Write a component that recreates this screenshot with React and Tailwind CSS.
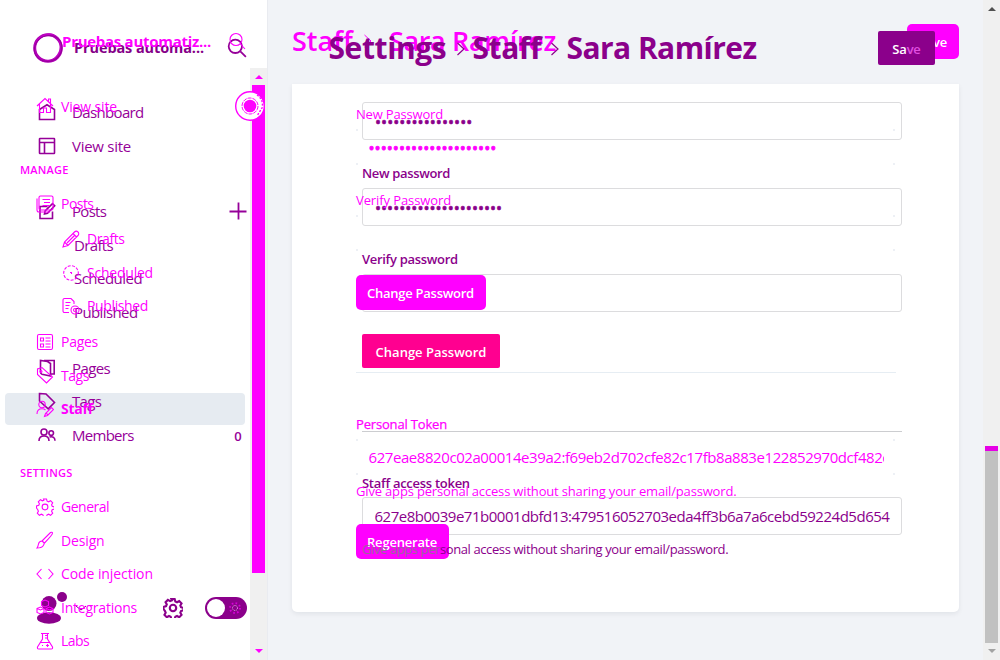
import React from 'react';

function Svg({ size = 18, sw = 1.2, className = '', children }) {
  return (
    <svg width={size} height={size} viewBox="0 0 18 18" fill="none" stroke="currentColor" strokeWidth={sw} className={'shrink-0 ' + className}>
      {children}
    </svg>
  );
}

const icons = {
  houseThin: <><path d="M1 9 9 1.5 17 9M3.5 7v8.500h4v-4.500h3v4.500h4V7M12.500 4.500V2h2v4" /></>,
  posts: <><rect x="3" y="1" width="14" height="14" rx="1.500" /><path d="M1 3.500v11.500a2 2 0 0 0 2 2h11M6.500 4.500h7.500M8 7.500h6M6.500 10.500h7" /></>,
  pencil: <><path d="M1 17l1.500-5L12.500 2a2.400 2.400 0 0 1 3.500 3.500L6 15.500zM2.500 12 6 15.500M11 3.500 14.500 7M5 13l7.500-7.500" /></>,
  clock: <><circle cx="9" cy="9" r="7.300" strokeDasharray="3 1.400" /><path d="M8 8.500h2M9.500 8.500v1.500" /></>,
  published: <><path d="M7 15.500H2.500A1.500 1.500 0 0 1 1 14V3A1.500 1.500 0 0 1 2.500 1.500H9L12 4.500V7M3.500 5.500h5M3.500 8.500h4M3.500 11.500h3" /><circle cx="13" cy="13" r="4" /><circle cx="13" cy="13" r="1.500" /></>,
  pages: <><rect x="1.500" y="1.500" width="15" height="15" rx="1.500" /><path d="M4.500 5h3v3h-3zM4.500 11h3v3h-3zM9.500 5h5M9.500 8h5M9.500 11h5M9.500 14h5" /></>,
  tagThin: <><path d="M1.500 8.500V3l4.500-1.500L16.500 11 10.500 17z" /><circle cx="5" cy="5.500" r="1" /></>,
  staff: <><circle cx="6" cy="4.500" r="3.200" /><path d="M1 14c0-3.500 2-5.200 5-5.200 1.500 0 2.600.4 3.500 1.200M8.500 16.500l1-3 6-6 2 2-6 6zM10 13l2 2" /></>,
  gear: <><path d="M7.500 1h3l.6 2.200 1.500.6 2-1.100 2.100 2.100-1.100 2 .6 1.500 2.300.7v2l-2.300.7-.6 1.500 1.100 2-2.100 2.100-2-1.100-1.500.6-.6 2.200h-3l-.6-2.200-1.500-.6-2 1.100-2.100-2.100 1.100-2-.6-1.500L.5 10V8l2.300-.7.6-1.500-1.100-2 2.100-2.100 2 1.100 1.500-.6z" /><circle cx="9" cy="9" r="2.900" /></>,
  brush: <><path d="M6 10 14.500 1.500q1.500-.8 2 .5T8.500 12zM6 10q-3 .2-3.500 3T1 17q4.500 0 6-2t1-3.200z" /></>,
  code: <><path d="M5.500 4 1 9l4.500 5M12.500 4 17 9l-4.500 5" /></>,
  modules: <><path d="M1 10.500 4.500 9 8 10.500v4L4.500 16 1 14.500zM10 10.500 13.500 9 17 10.500v4L13.500 16 10 14.500zM5.500 3.500 9 2l3.500 1.500v4L9 9 5.500 7.500zM1 10.500 4.500 12 8 10.500M10 10.500l3.500 1.500 3.500-1.500" /></>,
  flask: <><path d="M5 1.500h8M6.500 1.500v5.500L1.500 15q-.5 2 1.200 2h12.600q1.700 0 1.200-2L11.500 7V1.500M4 10.500h10M9 3.500h2.500M9 6h2.500M10 13.500h3M11.500 12v3M6 13.500h1" /></>,
  dash: <><path d="M1.500 6.500 9 1.800l7.500 4.700v10h-15z" /></>,
  browser: <><rect x="1.500" y="1.500" width="15" height="15" rx=".5" /><path d="M1.500 5.500h15M6.500 5.500v11" /></>,
  edit: <><path d="M9.500 4.500H2v12h12.500V9.500M6.500 12l.6-3L14.500 1.600l2.200 2.200L9.500 11.200z" /></>,
  book: <><path d="M6 1.500h10.200v13.500H13M2.500 1.500v11.500c0 1 .5 1.800 1.500 2.200l8.500 1.800V4.500L9.500 2.500 2.500 1.500z" /></>,
  tag: <><path d="M1.500 1.500 8 2l8.500 8.500-6.300 6.300L1.500 9z" /></>,
  members: <><circle cx="6" cy="6" r="3" /><circle cx="13.200" cy="7" r="2.300" /><path d="M1 15c0-3.300 2-5 5-5s5 1.700 5 5M11.500 11c3.500-1 5.500.8 5.500 3.800" /></>,
  chevron: <path d="M5.500 3 12 9l-6.500 6" />,
};

function ItemA({ icon, label, child, bold, className = '' }) {
  return (
    <div className={`flex h-[33.500px] shrink-0 items-center gap-[7px] text-[14px] ${child ? 'pl-[62px]' : 'pl-[36px]'} ${bold ? 'font-bold' : ''} ${className}`}>
      <Svg sw={1.1} size={18}>{icons[icon]}</Svg>
      {label}
    </div>
  );
}

function ItemB({ icon, label, right, className = '' }) {
  return (
    <div className={`flex h-[33.500px] shrink-0 items-center text-[15px] ${icon ? 'gap-[16px] pl-[38px]' : 'pl-[74px]'} ${className}`}>
      {icon && <Svg sw={1.6} size={18}>{icons[icon]}</Svg>}
      <span className="grow">{label}</span>
      {right}
    </div>
  );
}

function Corner({ className }) {
  return <span className={`absolute size-[2px] bg-[#edf0f5] ${className}`} />;
}

function GhostField({ className = '', children }) {
  return (
    <div className={`relative flex h-[38px] shrink-0 items-center overflow-hidden px-[12.500px] ${className}`}>
      <Corner className="left-0 top-[1px]" />
      <Corner className="right-[1px] top-[1px]" />
      <Corner className="bottom-[1px] left-0" />
      <Corner className="bottom-[1px] right-[1px]" />
      {children}
    </div>
  );
}

function Field({ className = '', children }) {
  return (
    <div className={`flex h-[38px] shrink-0 items-center overflow-hidden rounded-[3px] border border-[#dcdcde] px-[12px] ${className}`}>
      {children}
    </div>
  );
}

function SidebarOld() {
  return (
    <div className="flex h-full w-[250px] shrink-0 flex-col overflow-hidden text-[#ff00ff]">
      <div className="flex h-[82px] shrink-0 items-center justify-between pl-[62px] pr-[4px]">
        <span className="text-[15px] font-bold tracking-[-0.280px]">Pruebas automatiz...</span>
        <Svg size={18} sw={1.100} className="mr-[0px]"><circle cx="8" cy="7.500" r="6" /><path d="m12.500 12 4.500 5" /></Svg>
      </div>
      <ItemA icon="houseThin" label="View site" className="mt-[7.500px] tracking-[-0.140px]" />
      <div className="mt-[37px] h-[20px] shrink-0 pl-[20px] text-[11px] font-semibold leading-[20px] tracking-[0.200px]">MANAGE</div>
      <ItemA icon="posts" label="Posts" className="mt-[7px] tracking-[-0.540px]" />
      <ItemA child icon="pencil" label="Drafts" className="mt-[1.500px] tracking-[-0.420px]" />
      <ItemA child icon="clock" label="Scheduled" className="mt-[0.500px] tracking-[-0.220px]" />
      <ItemA child icon="published" label="Published" className="-mt-[0.500px] tracking-[-0.370px]" />
      <ItemA icon="pages" label="Pages" className="mt-[2.500px] tracking-[-0.270px]" />
      <ItemA icon="tagThin" label="Tags" className="tracking-[-0.440px]" />
      <ItemA bold icon="staff" label="Staff" className="tracking-[-0.220px]" />
      <div className="mt-[37px] h-[20px] shrink-0 pl-[20px] text-[11px] font-semibold leading-[20px] tracking-[0.240px]">SETTINGS</div>
      <ItemA icon="gear" label="General" className="mt-[7.500px] tracking-[-0.500px]" />
      <ItemA icon="brush" label="Design" className="tracking-[-0.150px]" />
      <ItemA icon="code" label="Code injection" className="tracking-[-0.080px]" />
      <ItemA icon="modules" label="Integrations" className="tracking-[-0.220px]" />
      <ItemA icon="flask" label="Labs" className="tracking-[-0.580px]" />
    </div>
  );
}

function NavScrollbar() {
  return (
    <div className="flex h-full w-[18px] shrink-0 flex-col pt-[68px]">
      <div className="relative flex w-[17px] grow flex-col items-center bg-[#f0f0f0] text-[#ff00ff]">
        <svg width="8" height="4" viewBox="0 0 8 4" className="mt-[7px] shrink-0"><path d="M0 4 4 0l4 4z" fill="currentColor" /></svg>
        <div className="mt-[6px] h-[488px] w-[13px] shrink-0 bg-[#ff00ff]" />
        <div className="grow" />
        <svg width="8" height="4" viewBox="0 0 8 4" className="mb-[7px] shrink-0"><path d="M0 0h8L4 4z" fill="currentColor" /></svg>
        <svg width="30" height="32" viewBox="0 0 30 32" fill="none" className="absolute left-[-15px] top-[22px]">
          <circle cx="15" cy="16" r="14.300" fill="#fff" stroke="#f0f" strokeWidth="1.400" />
          <path d="M22 5q7 5 5 13l-5 8" stroke="#f0f" strokeWidth="1.400" strokeDasharray="2 1.500" />
          <circle cx="15" cy="16" r="8" stroke="#f0f" strokeDasharray="4 1" />
          <circle cx="15" cy="16" r="6.300" fill="#f0f" />
        </svg>
      </div>
    </div>
  );
}

function MainOld() {
  return (
    <div className="flex grow flex-col text-[#ff00ff]">
      <div className="flex h-[84px] shrink-0 items-start justify-between pl-[24px] pr-[41px]">
        <h2 className="flex h-[82px] items-center whitespace-nowrap text-[27px] font-semibold">
          <span className="w-[67px]">Staff</span>
          <Svg size={18} sw={1} className="mr-[12px]">{icons.chevron}</Svg>
          <span className="tracking-[-0.350px]">Sara Ramírez</span>
        </h2>
        <button className="mt-[24px] h-[35px] w-[52px] rounded-[5px] bg-[#ff00ff] pt-[2px] text-right text-[13px] font-semibold tracking-[-0.200px] text-white"><span className="pr-[12px]">Save</span></button>
      </div>
      <div className="flex w-[628px] flex-col pl-[88px] text-[13px]">
        <div className="mt-[20px] h-[20px] leading-[20px] tracking-[-0.180px]">New Password</div>
        <GhostField className="mt-[4px]"><span className="mt-[1px] text-[16px] tracking-[0.070px] [-webkit-text-stroke:0.8px_#ff00ff]">•••••••••••••••••••••</span></GhostField>
        <div className="mt-[24px] h-[20px] leading-[20px] tracking-[-0.100px]">Verify Password</div>
        <GhostField className="mt-[4px]" />
        <button className="mt-[23px] h-[35px] w-[130px] rounded-[5px] bg-[#ff00ff] pl-[11px] pt-[2px] text-left font-semibold tracking-[-0.260px] text-white">Change Password</button>
        <div className="mt-[62px] h-px bg-[#e6edf3]" />
        <div className="mt-[41px] h-[20px] leading-[20px] tracking-[-0.170px] [-webkit-text-stroke:0.25px_#ff00ff]">Personal Token</div>
        <GhostField className="mt-[4px]">
          <span className="overflow-hidden whitespace-nowrap text-[15px] tracking-[-0.430px]">627eae8820c02a00014e39a2:f69eb2d702cfe82c17fb8a883e122852970dcf482c</span>
        </GhostField>
        <div className="mt-[5px] h-[20px] leading-[20px] tracking-[-0.170px]">Give apps personal access without sharing your email/password.</div>
        <button className="mt-[23px] h-[35px] w-[93px] rounded-[5px] bg-[#ff00ff] pl-[11px] pt-[2px] text-left font-semibold tracking-[-0.200px] text-white">Regenerate</button>
      </div>
    </div>
  );
}

function SidebarNew() {
  return (
    <nav className="flex h-full w-[268px] shrink-0 flex-col border-r border-[#e9ebf0] bg-white pr-[17px] text-[#960099]">
      <div className="flex h-[95px] shrink-0 items-center pl-[32px]">
        <svg width="32" height="32" viewBox="0 0 32 32" fill="none" className="shrink-0">
          <circle cx="16" cy="16" r="13.300" stroke="#b000b5" strokeWidth="3" />
          <ellipse cx="15.500" cy="16" rx="12.500" ry="14" stroke="#c000c5" strokeWidth="1.600" transform="rotate(35 16 16)" />
          <ellipse cx="16" cy="16.500" rx="14" ry="12.800" stroke="#95009a" strokeWidth="1" transform="rotate(-25 16 16)" />
        </svg>
        <span className="ml-[10px] grow whitespace-nowrap text-[14.500px] font-bold tracking-[-0.100px] text-[#850088]">Pruebas automa...</span>
        <Svg size={20} sw={1.6} className="mr-[3px]"><circle cx="7.500" cy="7.500" r="6" /><path d="m12 12 5 5" /></Svg>
      </div>
      <ItemB icon="dash" label="Dashboard" className="tracking-[-0.640px]" />
      <ItemB icon="browser" label="View site" className="mt-[1px] tracking-[-0.260px]" />
      <ItemB icon="edit" label="Posts" className="mt-[31.500px] tracking-[-0.700px]" right={<Svg size={18} sw={1.8} className="mr-[3px]"><path d="M9.500.5v17M.5 9.500h17" /></Svg>} />
      <ItemB label="Drafts" className="tracking-[-0.650px]" />
      <ItemB label="Scheduled" className="tracking-[-0.530px]" />
      <ItemB label="Published" className="tracking-[-0.600px]" />
      <ItemB icon="book" label="Pages" className="mt-[22.500px] tracking-[-0.610px]" />
      <div className="ml-[5px] mr-[5px] mt-[8px] h-[32px] shrink-0 rounded-[4px] bg-[#e6ebf1]">
        <ItemB icon="tag" label="Tags" className="-ml-[5px] -mt-[8px] tracking-[-0.700px]" />
      </div>
      <ItemB icon="members" label="Members" className="-mt-[6.500px] tracking-[-0.720px]" right={<span className="mr-[9px] pt-[3px] text-[13px] font-semibold">0</span>} />
      <div className="grow" />
      <div className="mb-[34px] flex h-[36px] shrink-0 items-center pl-[36px] text-[#8b008b]">
        <svg width="34" height="36" viewBox="0 0 34 36" fill="currentColor" className="shrink-0">
          <circle cx="13" cy="13.500" r="7.500" /><ellipse cx="13" cy="28" rx="12" ry="5.800" /><circle cx="26" cy="7" r="5" />
        </svg>
        <svg width="12" height="6" viewBox="0 0 12 6" fill="none" stroke="currentColor" className="ml-[5px] shrink-0"><path d="m1 1 5 4 5-4" /></svg>
        <Svg size={20} sw={1.9} className="ml-[76px]">{icons.gear}</Svg>
        <div className="ml-[22px] flex h-[22px] w-[42px] items-center rounded-full bg-[#8b008b] pl-[2px]">
          <span className="size-[18px] rounded-full bg-white" />
          <svg width="14" height="14" viewBox="0 0 14 14" fill="none" className="ml-[3px]">
            <circle cx="7" cy="7" r="5" stroke="#d800d8" strokeWidth="1.800" strokeDasharray="1.600 2.330" />
            <circle cx="7" cy="7" r="2.500" stroke="#f0b0f0" strokeWidth="1" strokeDasharray="1 1" />
          </svg>
        </div>
      </div>
    </nav>
  );
}

function MainNew() {
  return (
    <main className="flex grow flex-col bg-[#f1f3f7] text-[#8b008b]">
      <div className="flex h-[84px] shrink-0 items-start justify-between pl-[60.500px] pr-[48px]">
        <h1 className="relative z-10 flex h-[95px] items-center whitespace-nowrap text-[30px] font-bold">
          <span className="w-[123px] tracking-[-0.400px]">Settings</span>
          <Svg size={18} sw={1.2} className="mr-[3px] mt-[3px]">{icons.chevron}</Svg>
          <span className="w-[73px] tracking-[-0.450px]">Staff</span>
          <Svg size={18} sw={1.2} className="mr-[3px] mt-[3px]">{icons.chevron}</Svg>
          <span className="tracking-[-0.560px]">Sara Ramírez</span>
        </h1>
        <button className="relative z-10 mt-[31px] h-[34px] w-[57px] rounded-[2px] bg-[#8b008b] pt-[3px] text-[13px] font-semibold tracking-[-0.200px] text-white">Sa<span className="text-[#e050e0]">ve</span></button>
      </div>
      <section className="ml-[24px] flex h-[528px] w-[667px] shrink-0 flex-col rounded-b-[5px] bg-white pl-[70px] pr-[57px] text-[13px] shadow-[0_2px_5px_rgba(20,25,40,0.070)]">
        <Field className="mt-[18px]"><span className="mt-[1px] text-[16px] tracking-[0.070px] [-webkit-text-stroke:0.6px_#8b008b]">••••••••••••••••</span></Field>
        <div className="mt-[23px] h-[20px] font-semibold leading-[20px] tracking-[-0.350px]">New password</div>
        <Field className="mt-[5px]"><span className="mt-[1px] text-[16px] tracking-[0.040px] [-webkit-text-stroke:0.6px_#8b008b]">•••••••••••••••••••••</span></Field>
        <div className="mt-[23px] h-[20px] font-semibold leading-[20px] tracking-[-0.310px]">Verify password</div>
        <Field className="mt-[5px]" />
        <button className="mt-[22px] h-[34px] w-[138px] shrink-0 rounded-[2px] bg-[#ff0090] pt-[3px] text-[13px] font-semibold text-white">Change Password</button>
        <div className="mt-[63px] h-px shrink-0 bg-[#cccdd0]" />
        <div className="mt-[41px] h-[20px] font-semibold leading-[20px] tracking-[-0.280px]">Staff access token</div>
        <Field className="mt-[4px]"><span className="-ml-[0.500px] whitespace-nowrap text-[15px] tracking-[-0.480px]">627e8b0039e71b0001dbfd13:479516052703eda4ff3b6a7a6cebd59224d5d654</span></Field>
        <div className="relative z-10 mt-[4px] h-[20px] whitespace-nowrap leading-[20px] tracking-[-0.400px]"><span className="text-[#986898]">Give apps per</span>sonal access without sharing your email/password.</div>
      </section>
    </main>
  );
}

function PageScrollbar() {
  return (
    <div className="flex h-full w-[17px] shrink-0 flex-col items-center bg-[#f0f0f0]">
      <svg width="8" height="4" viewBox="0 0 8 4" className="mt-[7px] shrink-0"><path d="M0 4 4 0l4 4z" fill="#505050" /></svg>
      <div className="mt-[435px] h-[5px] w-[13px] shrink-0 bg-[#e600e6]" />
      <div className="h-[192px] w-[13px] shrink-0 bg-[#c1c1c1]" />
      <svg width="8" height="4" viewBox="0 0 8 4" className="mt-[6px] shrink-0"><path d="M0 0h8L4 4z" fill="#a3a3a3" /></svg>
    </div>
  );
}

export default function App() {
  return (
    <div className="relative h-[660px] w-[1000px] overflow-hidden font-['Open_Sans',sans-serif]">
      <div className="flex h-full w-full">
        <SidebarNew />
        <MainNew />
        <PageScrollbar />
      </div>
      <div className="absolute inset-0 flex">
        <SidebarOld />
        <NavScrollbar />
        <MainOld />
      </div>
    </div>
  );
}
